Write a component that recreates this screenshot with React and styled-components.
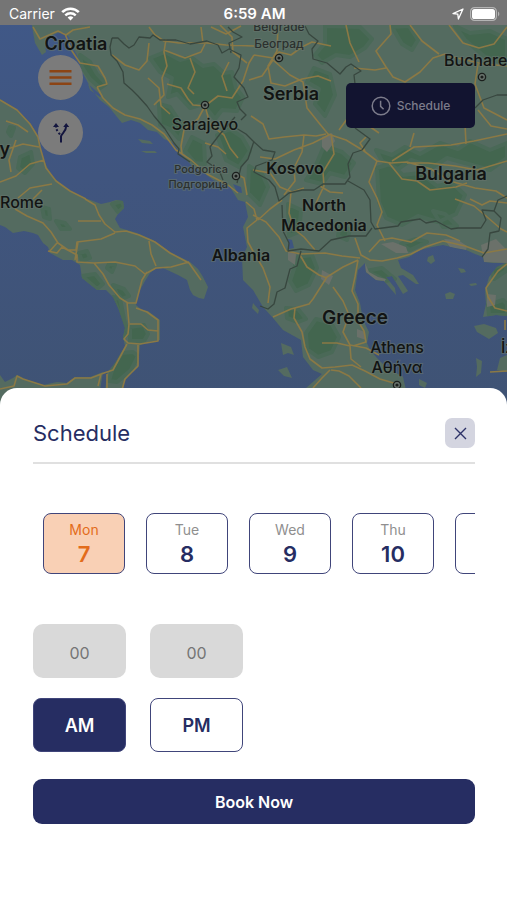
import React, { useState } from "react";
import styled, { createGlobalStyle } from "styled-components";

const days = [
	{ name: "Mon", date: 7 },
	{ name: "Tue", date: 8 },
	{ name: "Wed", date: 9 },
	{ name: "Thu", date: 10 },
	{ name: "Fri", date: 11 },
];

const land = [
	// Balkans
	"M31 20L33 32 35 43 42 55 46 52 45 45 50 37 57 33 63 32 69 37 73 48 78 57 82 72 92 90 100 100 109 107 117 117 122 123 131 120 140 123 148 130 157 132 164 139 173 143 178 150 182 155 193 167 203 172 213 180 230 187 238 200 245 202 248 217 243 227 247 247 242 258 243 280 253 290 263 307 273 318 283 330 301 340 303 357 313 370 322 374 306 388 300 410H415L406 390 403 377 386 367 377 358 370 350 367 343 369 332 363 320 360 303 355 290 358 270 365 263 366 272 376 280 384 281 396 295 395 288 386 277 392 276 403 294 408 291 398 276 403 275 416 284 419 284 413 275 401 268 398 260 409 257 420 250 432 247 443 245 455 248 466 250 475 254 483 257 484 262 493 263 507 263V20Z",
	// Italy
	"M0 99L17 110 30 123 37 134 40 143 42 156 47 167 53 177 60 183 70 191 85 198 101 204 110 202 116 200 123 201 124 208 118 214 115 219 120 228 137 233 153 240 170 252 190 262 198 269 203 277 208 287 204 299 199 298 193 295 190 290 187 280 178 275 163 268 155 269 150 273 145 281 140 290 137 298 136 305 142 310 148 311 160 320 160 340 148 342 140 345 139 356 138 367 130 374 124 382 123 392H105L107 373 115 363 125 346 123 337 125 328 119 310 113 297 106 290 97 290 82 278 80 265 72 260 63 260 50 253 48 247 43 243 38 235 33 233 24 231 13 233 5 227 0 225Z",
	// Sicily
	"M0 375L5 382 13 378 17 375 25 379 43 385 57 382 67 383 75 377 90 377 103 372 100 390V410H0Z",
	// Turkey
	"M507 262L497 267 489 277 485 291 486 304 483 317 496 315 507 316Z",
	// islands
	"M428 257l5-2 2 6-4 3-4-3Z",
	"M445 294l5-2 5 2-2 5-7 0Z",
	"M458 268l6 1 2 3-5 1Z",
	"M469 284l7-1 1 2-6 1Z",
	"M474 326l10-2 12 4 2 5-9 6-12-7Z",
	"M476 358l6 3-1 12-5 4 1-10Z",
	"M419 379l8 4-2 5-6-3Z",
	"M281 343l10 4 3 8-6-2-5 2Z",
	"M278 370l9-3 5 11-8-2Z",
	"M253 303l6 7-1 4-6-6Z",
	"M88 84l6 5 8 7-2 1-10-7Z",
	"M138 139l12 2 3 3-11-1Z",
	"M141 151l14 0 2 2-11 0Z",
	"M500 358l7-3v17l-10-2Z",
];

const forest = [
	"M80 55L90 62 97 74 106 84 100 88 90 79 82 67Z",
	"M150 58L165 52 180 60 191 57 203 66 214 64 224 73 232 72 236 88 243 97 237 111 222 110 215 119 203 104 190 108 177 94 168 97 172 78 160 72Z",
	"M159 104L170 107 178 119 185 125 179 139 170 129 160 125Z",
	"M192 137L204 143 205 164 195 163 185 151Z",
	"M325 26L360 27 372 39 365 48 350 57 336 55 322 63 315 55 325 43Z",
	"M314 68L330 74 335 95 325 116 315 104 319 89 307 82Z",
	"M392 27L409 26 418 40 412 50 402 44Z",
	"M455 26L470 33 490 31 507 39V65L484 56 465 40Z",
	"M324 146L342 152 354 163 345 177 330 173 322 184 306 180 316 165Z",
	"M376 150L392 155 405 147 420 154 440 143 458 149 470 141 490 150 507 143V158L490 170 465 163 447 158 433 167 411 160 398 169 382 161Z",
	"M377 168L390 164 403 175 420 173 437 186 452 183 465 195 456 214 438 222 418 216 402 225 386 218 379 202Z",
	"M217 135L230 129 242 137 250 151 239 167 226 160Z",
	"M249 166L262 174 268 187 260 205 248 193Z",
	"M288 204L301 210 299 232 289 236Z",
	"M298 257L312 255 317 268 309 285 296 291 290 281Z",
	"M316 319L331 323 339 337 332 352 318 357 307 349 306 333Z",
	"M286 308L298 309 306 319 298 322 287 318Z",
	"M366 271L382 268 395 279 385 281 377 276Z",
	"M42 207L49 209 50 219 44 217Z",
	"M56 221L65 223 70 229 61 229Z",
	"M79 253L87 251 90 258 82 261Z",
	"M82 276L95 274 103 284 97 289Z",
	"M109 264L115 265 112 272 107 268Z",
	"M113 285L124 289 129 296 122 299 117 294Z",
	"M113 297L120 299 124 319 128 333 124 337 122 320Z",
	"M130 327L144 325 148 334 144 341 130 341Z",
	"M122 353L133 352 138 356 131 370 117 382 109 381 113 367Z",
	"M112 204L122 201 124 207 118 212Z",
	"M20 157L31 152 33 164 25 173 18 168Z",
	"M10 127L14 128 11 136 8 132Z",
	"M488 305L503 300 507 304V315H489Z",
	"M491 268L506 264V271L494 279Z",
	"M340 224L350 230 347 240 338 236Z",
	"M401 244L416 239 427 242 410 250Z",
	"M433 211L445 214 457 226 443 227Z",
];

const pale = [
	"M365 263L369 272 378 277 386 279 383 284 373 280 364 271Z",
	"M381 244L393 242 406 247 408 253 396 253Z",
	"M444 239L458 240 467 246 466 250 450 247Z",
	"M481 245L496 239 507 250V263L484 262Z",
	"M288 250L296 254 295 265 288 260Z",
	"M322 270L333 276 329 285 321 279Z",
	"M357 329L365 332 366 340 357 337Z",
	"M322 137L332 133 335 141 327 152 322 147Z",
	"M487 294L496 295 495 305 487 307Z",
];

const roads = [
	"M0 100L17 110 30 124 38 137 40 147 46 168 56 181 70 191 86 199",
	"M85 199L95 205 99 215 105 224 115 232 126 231 139 235 155 242 170 253 189 263 201 280",
	"M15 209L27 216 43 223 51 232 58 243 68 250 76 250 77 242 101 239 115 233",
	"M48 251L57 253 62 247 77 255 77 262 94 263 115 262 135 266 145 274 156 268 171 267 189 262",
	"M78 242L75 260M78 221L101 221M149 241L151 254 156 266M57 243L49 252M94 263L103 274 109 285 120 298 128 303 136 303 142 280 147 272",
	"M127 302L129 324 128 334 124 339 128 343 140 344 158 341 158 320 147 312 136 308",
	"M130 324L141 324 148 330 158 331M127 344L113 370 104 373 91 378 75 378 67 384 45 386 23 379 17 376 14 386 0 389",
	"M138 345L138 366 125 379 122 390M107 374L107 389M101 374L98 386",
	"M6 121L18 125 28 132M4 150L23 144 39 147M0 182L16 176 30 164 44 160M18 198L30 188 52 184M33 199L42 190M16 140L9 160 11 172",
	"M33 27L40 39 49 35 58 31 66 35 73 30 90 27M65 34L72 51 80 63 98 66 105 78 107 84 97 87",
	"M97 87L103 98 113 108 125 115 140 119 152 125 164 134 176 150 191 160 207 174 228 185 238 193",
	"M149 27L155 35 164 41 179 43 207 43 226 45 254 46",
	"M166 39L164 52 167 66 162 78 164 95 154 105M164 50L185 58 201 52 205 44M112 55L125 65 139 70 147 61 149 43",
	"M167 84L181 88 188 99 193 105 205 106M190 58L195 72 188 88 194 94M205 106L198 119 184 130 181 146 182 154",
	"M205 106L218 96 232 98 243 81 249 63 254 55M205 106L210 124 224 135 230 148 238 158M148 78L159 88 161 106 170 114",
	"M229 62L222 76 227 91M201 27L203 43M220 25L232 37 233 52 247 63",
	"M254 55L273 58 279 52 291 55 302 47 312 42 331 46M278 26L277 51 268 66 271 83 285 86 302 79 318 76 331 81",
	"M249 80L262 76 273 60 290 75 303 82 307 108 319 123 328 134 346 140 364 151 377 161 391 163 407 162 431 169 450 181 475 188 496 191 507 198",
	"M346 25L350 43 359 62M390 25L391 34 376 51 386 67 393 77 405 82 420 72 433 58 445 54 457 58 483 64 507 66",
	"M410 25L422 41 439 54M449 25L463 43 479 48 494 44 507 27M354 68L375 70 386 68M478 64L475 84 484 108 507 120",
	"M251 116L263 124 269 139 284 137 304 135 316 136 326 134M260 157L275 159 294 150 313 143 331 134",
	"M304 135L302 152 294 168 295 181 284 195M331 134L334 154 323 172 324 186 316 203",
	"M377 161L369 182 377 198 382 212 377 225 385 241M389 163L402 179 417 181 430 190 456 187 467 183M365 151L360 143 366 137",
	"M392 161L414 147 451 145 474 141 507 134M414 133L410 147M465 124L466 144M407 163L428 163 455 166 477 170 507 161",
	"M253 170L270 173 280 187 292 192 304 188M291 192L289 213 294 229 304 237 315 250",
	"M246 202L254 209 257 220 247 228 248 242 254 253 263 268 270 287 268 303",
	"M258 220L270 209 282 200M253 215L266 222 279 237 286 251 301 254 325 253 342 256 360 258",
	"M355 238L361 255 370 260 382 261 397 258 411 254 425 247 443 241 465 246 484 253 507 249",
	"M369 252L380 240 392 238 411 242 427 233 446 235 460 241M358 260L343 267 327 277 313 299 309 304 291 309 273 317",
	"M358 260L355 277 352 291 358 304 358 321 364 331 366 342 353 346",
	"M300 255L307 267 319 275 327 278M333 287L343 301 349 315 343 332 350 345 366 348 379 355",
	"M309 304L295 308 294 318 302 332 305 347 310 359 322 368 335 367 352 365 365 371 380 379 397 384",
	"M322 343L337 343 350 346 351 359 361 367M331 370L339 371 349 376 361 388M313 388L322 378 330 370",
	"M470 199L482 205 490 201 507 203M455 199L474 206 486 216 501 229 507 232",
	"M507 264L498 271 486 288 488 297 495 308 507 311M490 372L507 371M505 320V330",
	"M339 130L347 119 366 124 379 133M475 90L460 96 452 111M478 110L491 126 507 129",
	"M205 143L218 147 226 154M234 173L244 178 247 195M320 186L330 192 343 193M211 27L226 34 241 26",
];

const borders = [
	"M112 38L118 38 124 44 129 48 134 45 139 37 150 38 153 35 160 40 176 40 190 44 207 41 218 45 222 53 229 49 241 55 239 68 234 77 244 88 248 97 237 102 240 109 246 115 241 120",
	"M112 38L110 47 111 55 117 61 123 72 124 83 132 90 138 96 147 106 154 116 165 129 174 143 179 149 178 154 190 162",
	"M235 117L220 134 210 147 212 156 207 162 219 170 223 180M236 128L246 134 254 142 263 150 275 152 272 160 256 166 254 172 269 180 275 187 279 201 289 193 302 190 314 190 323 184 345 184 350 177 348 164 353 153 362 150 370 139 355 128",
	"M228 27L233 32 242 37 229 43 231 53M305 26L309 34 318 41 312 49 313 59 327 63 340 74 346 67 351 64 361 71 354 75 355 84",
	"M348 181L364 190 370 200 371 222 375 229 398 226 401 222 420 219 426 223 436 221 451 229 458 228 481 228 486 220 482 210 494 211 498 200 507 196",
	"M494 211L501 218 499 231 490 233 488 249 482 257M282 205L283 231 289 243 288 251 301 249 319 251 331 240 349 236 366 236 372 228",
	"M301 251L297 266 290 269 285 288 277 292 274 304 268 309 260 306M475 108L483 100 497 95 507 95M254 141L248 159 241 167 237 183",
];

const labels = [
	{ x: 76, y: 50, size: 18, weight: 600, text: "Croatia" },
	{ x: 279, y: 31, size: 12, weight: 500, text: "Belgrade", soft: true },
	{ x: 279, y: 48, size: 12, weight: 500, text: "Београд", soft: true },
	{ x: 291, y: 100, size: 18, weight: 600, text: "Serbia" },
	{ x: 444, y: 66, size: 16, weight: 500, text: "Buchare", anchor: "start" },
	{ x: 205, y: 130, size: 16, weight: 500, text: "Sarajevo" },
	{ x: 10, y: 155, size: 18, weight: 600, text: "y", anchor: "end" },
	{ x: 228, y: 173, size: 11, weight: 500, text: "Podgorica", anchor: "end", soft: true },
	{ x: 228, y: 188, size: 11, weight: 500, text: "Подгорица", anchor: "end", soft: true },
	{ x: 295, y: 174, size: 16, weight: 600, text: "Kosovo" },
	{ x: 451, y: 180, size: 18, weight: 600, text: "Bulgaria" },
	{ x: 0, y: 208, size: 16, weight: 500, text: "Rome", anchor: "start" },
	{ x: 324, y: 211, size: 16, weight: 600, text: "North" },
	{ x: 324, y: 231, size: 16, weight: 600, text: "Macedonia" },
	{ x: 241, y: 261, size: 16, weight: 600, text: "Albania" },
	{ x: 355, y: 324, size: 19, weight: 600, text: "Greece" },
	{ x: 397, y: 353, size: 16, weight: 500, text: "Athens" },
	{ x: 397, y: 373, size: 16, weight: 500, text: "Αθήνα" },
	{ x: 501, y: 353, size: 16, weight: 500, text: "İz", anchor: "start" },
];

const cities = [
	[205, 105],
	[279, 58],
	[482, 77],
	[236, 176],
	[397, 385],
];

const Map = () => (
	<MapDrawing viewBox="0 25 507 380" preserveAspectRatio="xMidYMin slice" aria-label="Map">
		<defs>
			<linearGradient id="sea" x1="0" y1="0" x2="0" y2="1">
				<stop offset="0" stopColor="#405887" />
				<stop offset="0.4" stopColor="#40557f" />
				<stop offset="1" stopColor="#3f5374" />
			</linearGradient>
			<clipPath id="coast">
				<path d={land.join("")} />
			</clipPath>
		</defs>
		<rect y="20" width="507" height="390" fill="url(#sea)" />
		<path d={land.join("")} fill="#546b60" />
		<g clipPath="url(#coast)">
			<path d={forest.join("")} fill="#43664f" stroke="#4a6957" strokeWidth="4" strokeLinejoin="round" />
			<path d={pale.join("")} fill="#6b716a" />
		</g>
		<path d="M55 35l7-3 5 6-5 3ZM288 239l4 1 2 8-5 1ZM233 184l8 3 1 6-5-1Z" fill="#3e5580" />
		<path d={roads.join("")} fill="none" stroke="#8b7945" strokeWidth="1.6" strokeLinejoin="round" />
		<path d={borders.join("")} fill="none" stroke="#38473f" strokeWidth="1.3" strokeLinejoin="round" />
		{cities.map(([x, y]) => (
			<g key={x}>
				<circle cx={x} cy={y} r="3.6" fill="#6b756f" stroke="#1b1f1d" strokeWidth="1.4" />
				<circle cx={x} cy={y} r="1.6" fill="#1b1f1d" />
			</g>
		))}
		{labels.map((l) => (
			<MapLabel
				key={l.text}
				x={l.x}
				y={l.y}
				textAnchor={l.anchor || "middle"}
				$size={l.size}
				$weight={l.weight}
				$soft={l.soft}
			>
				{l.text}
			</MapLabel>
		))}
	</MapDrawing>
);

const App = () => {
	const [day, setDay] = useState(7);
	const [period, setPeriod] = useState("AM");

	return (
		<Page>
			<GlobalStyle />
			<StatusBar>
				<Carrier>
					Carrier
					<svg width="19" height="14" viewBox="0 0 19 14" fill="none" stroke="#fff" aria-hidden="true">
						<path d="M1.2 5.2a11.8 11.8 0 0 1 16.6 0" strokeWidth="2.6" />
						<path d="M4.3 8.4a7.4 7.4 0 0 1 10.4 0" strokeWidth="2.4" />
						<path d="M9.5 13.6L6.6 10.6a4.1 4.1 0 0 1 5.8 0Z" fill="#fff" stroke="none" />
					</svg>
				</Carrier>
				<Clock>6:59 AM</Clock>
				<StatusIcons>
					<svg width="12" height="12" viewBox="0 0 12 12" aria-hidden="true">
						<path d="M11 1L1 5.6 5.8 6.2 6.4 11Z" fill="none" stroke="#fff" strokeWidth="1.3" strokeLinejoin="round" />
					</svg>
					<svg width="30" height="14" viewBox="0 0 30 14" aria-hidden="true">
						<rect x="0.6" y="0.6" width="25.8" height="12.8" rx="4" fill="none" stroke="#b4b4b4" strokeWidth="1.2" />
						<rect x="2" y="2" width="23" height="10" rx="2.6" fill="#fff" />
						<path d="M28 4.6c1.8.8 1.8 4 0 4.8Z" fill="#b4b4b4" />
					</svg>
				</StatusIcons>
			</StatusBar>

			<MapArea>
				<Map />
				<RoundButtons>
					<RoundButton aria-label="Menu">
						<svg width="23" height="17" viewBox="0 0 23 17" stroke="#8c4414" strokeWidth="2.4">
							<path d="M0.5 2.2H22.5M0.5 8.5H22.5M0.5 14.8H22.5" />
						</svg>
					</RoundButton>
					<RoundButton aria-label="Routes">
						<svg width="18" height="21" viewBox="0 0 18 21" fill="none" stroke="#14163f" strokeWidth="2">
							<path d="M9 20.5V14.6C9 11.6 14.2 10.4 14.2 4" />
							<path d="M8 12.4L6.6 10.8M5.4 9L4.5 7.2M4 5.4V4" />
							<path d="M1 5L4 1 7 5ZM11.2 5L14.2 1 17.2 5Z" fill="#14163f" stroke="none" />
						</svg>
					</RoundButton>
				</RoundButtons>
				<ScheduleButton>
					<svg width="20" height="20" viewBox="0 0 20 20" fill="none" stroke="#7c7c8b" strokeWidth="1.5" aria-hidden="true">
						<circle cx="10" cy="10" r="8.8" />
						<path d="M9.6 4.8V10.4L12.6 13.2" />
					</svg>
					Schedule
				</ScheduleButton>
			</MapArea>

			<Sheet>
				<SheetHeader>
					<Title>Schedule</Title>
					<CloseButton aria-label="Close">
						<svg width="13" height="13" viewBox="0 0 13 13" stroke="#2d3267" strokeWidth="1.4">
							<path d="M1 1L12 12M12 1L1 12" />
						</svg>
					</CloseButton>
				</SheetHeader>

				<Days>
					{days.map((d) => (
						<Day key={d.date} $active={d.date === day} onClick={() => setDay(d.date)}>
							<DayName $active={d.date === day}>{d.name}</DayName>
							<DayDate>{d.date}</DayDate>
						</Day>
					))}
				</Days>

				<TimeGrid>
					<TimeInput placeholder="00" aria-label="Hours" />
					<TimeInput placeholder="00" aria-label="Minutes" />
					<Period $active={period === "AM"} onClick={() => setPeriod("AM")}>
						AM
					</Period>
					<Period $active={period === "PM"} onClick={() => setPeriod("PM")}>
						PM
					</Period>
				</TimeGrid>

				<BookButton>Book Now</BookButton>
			</Sheet>
		</Page>
	);
};

export default App;

const GlobalStyle = createGlobalStyle`
	* {
		box-sizing: border-box;
	}

	body {
		margin: 0;
		background-color: white;
	}

	body, button, input {
		font-family: Inter, "Liberation Sans", sans-serif;
	}

	button {
		padding: 0;
		border: none;
		cursor: pointer;
	}

	svg {
		display: block;
		flex-shrink: 0;
	}
`;

const Page = styled.main`
	display: flex;
	flex-direction: column;
	min-height: 100vh;
`;

const StatusBar = styled.header`
	display: grid;
	grid-template-columns: 1fr auto 1fr;
	align-items: center;
	padding: 2px 7px 0 9px;
	height: 25px;
	background-color: #757575;
	color: white;
	font-size: 14px;
`;

const Carrier = styled.div`
	display: flex;
	align-items: center;
	gap: 6px;
`;

const Clock = styled.div`
	font-size: 15px;
	font-weight: 600;
`;

const StatusIcons = styled.div`
	display: flex;
	align-items: center;
	justify-content: flex-end;
	gap: 6px;
`;

const MapArea = styled.section`
	position: relative;
	display: flex;
	flex: 1;
	justify-content: space-between;
	align-items: flex-start;
	min-height: 380px;
	padding: 30px 32px 0 38px;
`;

const MapDrawing = styled.svg`
	position: absolute;
	top: 0;
	left: 0;
	width: 100%;
	height: 100%;
`;

const MapLabel = styled.text`
	font-size: ${(props) => props.$size}px;
	font-weight: ${(props) => props.$weight};
	fill: ${(props) => (props.$soft ? "#2b302e" : "#121413")};
	stroke: #66756d;
	stroke-width: 2px;
	stroke-opacity: 0.6;
	paint-order: stroke;
`;

const RoundButtons = styled.nav`
	position: relative;
	display: flex;
	flex-direction: column;
	gap: 10px;
`;

const RoundButton = styled.button`
	display: flex;
	align-items: center;
	justify-content: center;
	width: 45px;
	height: 45px;
	border-radius: 50%;
	background-color: #7b7b7b;
`;

const ScheduleButton = styled.button`
	position: relative;
	display: flex;
	align-items: center;
	justify-content: center;
	gap: 6px;
	width: 129px;
	height: 45px;
	margin-top: 28px;
	border-radius: 5px;
	background-color: #121430;
	color: #7c7c8b;
	font-size: 12px;
	font-weight: 500;
`;

const Sheet = styled.section`
	position: relative;
	margin-top: -17px;
	padding: 30px 32px 76px 33px;
	border-radius: 17px 17px 0 0;
	background-color: white;
	color: #262d62;
`;

const SheetHeader = styled.div`
	display: flex;
	align-items: center;
	justify-content: space-between;
	padding-bottom: 14px;
	border-bottom: 2px solid #e0e0e0;
`;

const Title = styled.h1`
	margin: 0;
	font-size: 22px;
	font-weight: 400;
	line-height: 30px;
`;

const CloseButton = styled.button`
	display: flex;
	align-items: center;
	justify-content: center;
	width: 30px;
	height: 30px;
	border-radius: 7px;
	background-color: #d4d5e0;
`;

const Days = styled.div`
	display: flex;
	gap: 21px;
	margin-top: 49px;
	padding-left: 10px;
	overflow-x: auto;
	scrollbar-width: none;
`;

const Day = styled.button`
	display: flex;
	flex-direction: column;
	flex-shrink: 0;
	align-items: center;
	justify-content: center;
	width: 82px;
	height: 61px;
	border: 1px solid #40457a;
	border-radius: 8px;
	background-color: ${(props) => (props.$active ? "#f9d0b5" : "white")};
	color: ${(props) => (props.$active ? "#e36c1b" : "#262d62")};
`;

const DayName = styled.span`
	color: ${(props) => (props.$active ? "#e36c1b" : "#8f8f8f")};
	font-size: 14px;
	line-height: 20px;
`;

const DayDate = styled.span`
	font-size: 22px;
	font-weight: 600;
	line-height: 28px;
`;

const TimeGrid = styled.div`
	display: grid;
	grid-template-columns: 93px 93px;
	gap: 20px 24px;
	margin-top: 50px;
`;

const TimeInput = styled.input`
	width: 100%;
	height: 54px;
	padding: 4px 0 0;
	border: none;
	border-radius: 10px;
	background-color: #d9d9d9;
	color: #262d62;
	font-size: 16px;
	text-align: center;

	&::placeholder {
		color: #757575;
		opacity: 1;
	}
`;

const Period = styled.button`
	height: 54px;
	border: 1px solid #40457a;
	border-radius: 8px;
	background-color: ${(props) => (props.$active ? "#262d62" : "white")};
	color: ${(props) => (props.$active ? "white" : "#262d62")};
	font-size: 18px;
	font-weight: 600;
`;

const BookButton = styled.button`
	width: 100%;
	height: 45px;
	margin-top: 27px;
	border-radius: 9px;
	background-color: #262d62;
	color: white;
	font-size: 16px;
	font-weight: 600;
`;
